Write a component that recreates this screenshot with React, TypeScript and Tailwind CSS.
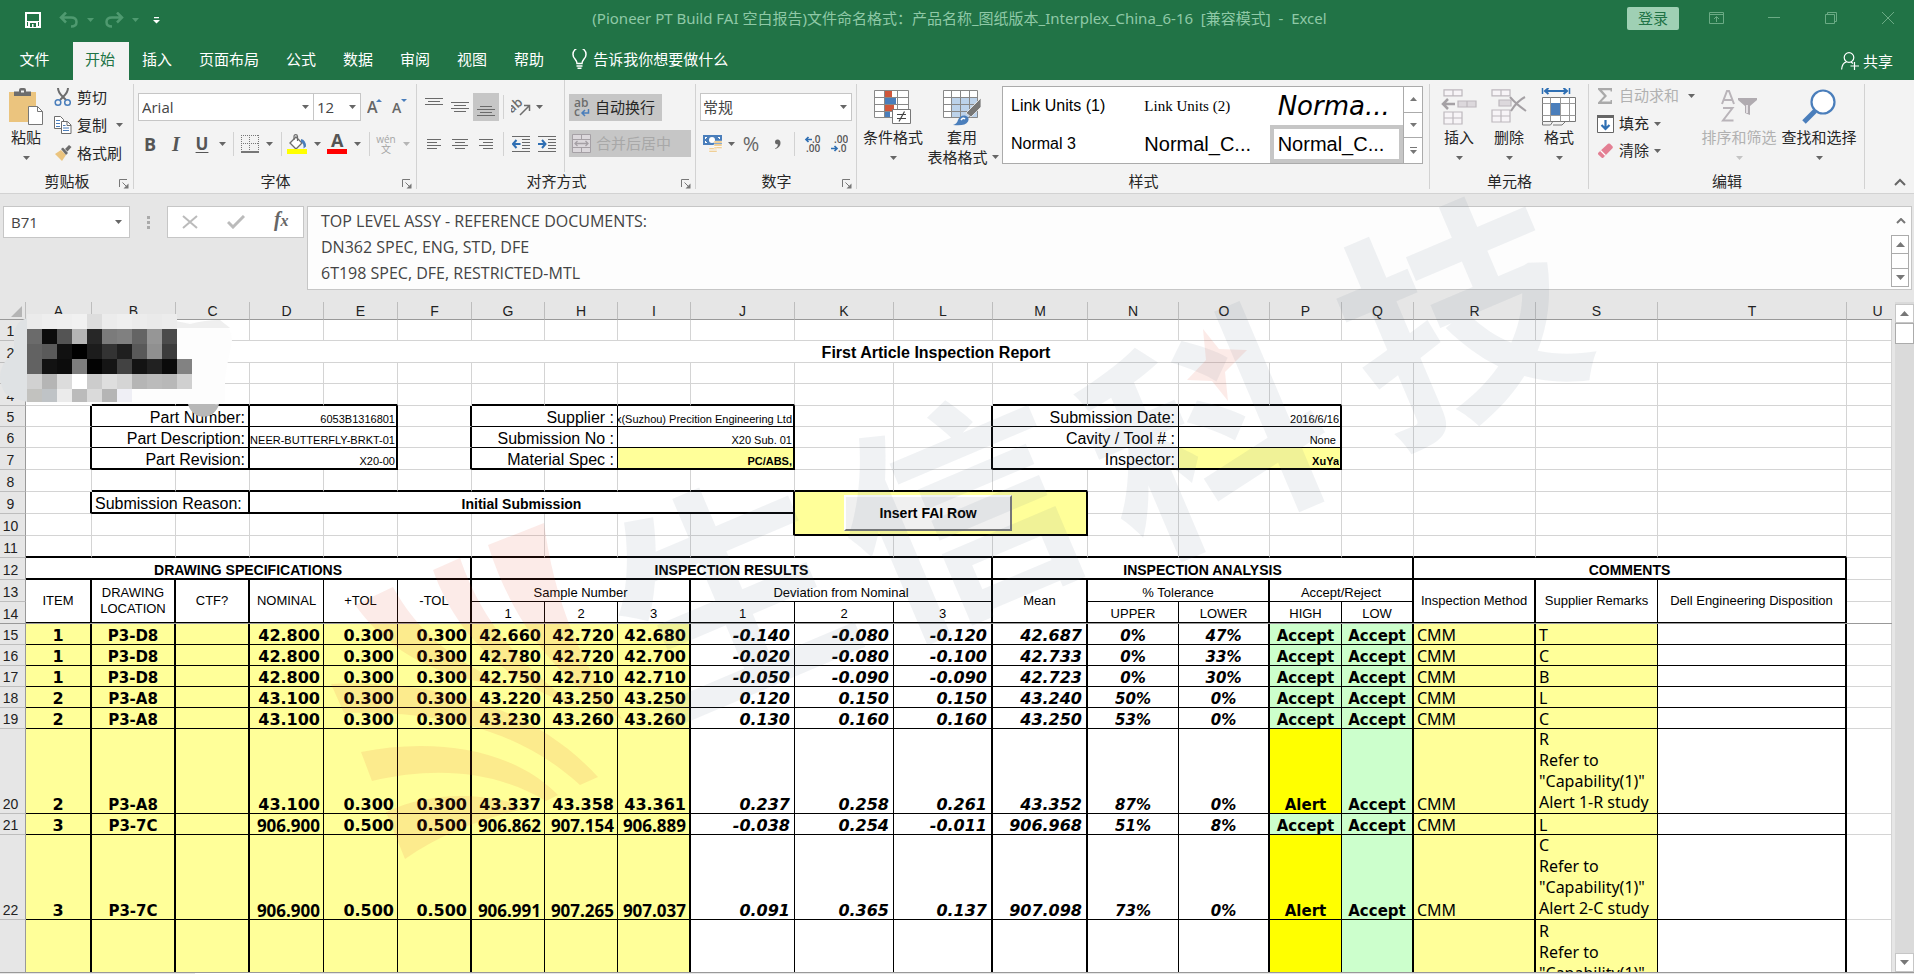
import React, { useState } from "react";
import clsx from "clsx";

type Line = "none" | "grid" | "thin" | "thick";

const RIGHT: Record<Line, string> = {
    none: "border-r-0",
    grid: "border-r border-r-[#d4d4d4]",
    thin: "border-r border-r-black",
    thick: "border-r-2 border-r-black",
};

const BOTTOM: Record<Line, string> = {
    none: "border-b-0",
    grid: "border-b border-b-[#d4d4d4]",
    thin: "border-b border-b-black",
    thick: "border-b-2 border-b-black",
};

const COLUMNS = [
    { name: "A", width: "w-[66px]" },
    { name: "B", width: "w-[84px]" },
    { name: "C", width: "w-[74px]" },
    { name: "D", width: "w-[74px]" },
    { name: "E", width: "w-[74px]" },
    { name: "F", width: "w-[74px]" },
    { name: "G", width: "w-[73px]" },
    { name: "H", width: "w-[73px]" },
    { name: "I", width: "w-[73px]" },
    { name: "J", width: "w-[104px]" },
    { name: "K", width: "w-[99px]" },
    { name: "L", width: "w-[99px]" },
    { name: "M", width: "w-[95px]" },
    { name: "N", width: "w-[91px]" },
    { name: "O", width: "w-[91px]" },
    { name: "P", width: "w-[72px]" },
    { name: "Q", width: "w-[72px]" },
    { name: "R", width: "w-[122px]" },
    { name: "S", width: "w-[122px]" },
    { name: "T", width: "w-[189px]" },
    { name: "U", width: "" },
];

interface Measure {
    row: number;
    item: string;
    location: string;
    nominal: string;
    tol: string;
    samples: string[];
    deviation: string[];
    mean: string;
    upper: string;
    lower: string;
    high: string;
    low: string;
    method: string;
    remarks: string[];
}

const MEASURES: Measure[] = [
    { row: 15, item: "1", location: "P3-D8", nominal: "42.800", tol: "0.300", samples: ["42.660", "42.720", "42.680"], deviation: ["-0.140", "-0.080", "-0.120"], mean: "42.687", upper: "0%", lower: "47%", high: "Accept", low: "Accept", method: "CMM", remarks: ["T"] },
    { row: 16, item: "1", location: "P3-D8", nominal: "42.800", tol: "0.300", samples: ["42.780", "42.720", "42.700"], deviation: ["-0.020", "-0.080", "-0.100"], mean: "42.733", upper: "0%", lower: "33%", high: "Accept", low: "Accept", method: "CMM", remarks: ["C"] },
    { row: 17, item: "1", location: "P3-D8", nominal: "42.800", tol: "0.300", samples: ["42.750", "42.710", "42.710"], deviation: ["-0.050", "-0.090", "-0.090"], mean: "42.723", upper: "0%", lower: "30%", high: "Accept", low: "Accept", method: "CMM", remarks: ["B"] },
    { row: 18, item: "2", location: "P3-A8", nominal: "43.100", tol: "0.300", samples: ["43.220", "43.250", "43.250"], deviation: ["0.120", "0.150", "0.150"], mean: "43.240", upper: "50%", lower: "0%", high: "Accept", low: "Accept", method: "CMM", remarks: ["L"] },
    { row: 19, item: "2", location: "P3-A8", nominal: "43.100", tol: "0.300", samples: ["43.230", "43.260", "43.260"], deviation: ["0.130", "0.160", "0.160"], mean: "43.250", upper: "53%", lower: "0%", high: "Accept", low: "Accept", method: "CMM", remarks: ["C"] },
    { row: 20, item: "2", location: "P3-A8", nominal: "43.100", tol: "0.300", samples: ["43.337", "43.358", "43.361"], deviation: ["0.237", "0.258", "0.261"], mean: "43.352", upper: "87%", lower: "0%", high: "Alert", low: "Accept", method: "CMM", remarks: ["R", "Refer to", '"Capability(1)"', "Alert 1-R study"] },
    { row: 21, item: "3", location: "P3-7C", nominal: "906.900", tol: "0.500", samples: ["906.862", "907.154", "906.889"], deviation: ["-0.038", "0.254", "-0.011"], mean: "906.968", upper: "51%", lower: "8%", high: "Accept", low: "Accept", method: "CMM", remarks: ["L"] },
    { row: 22, item: "3", location: "P3-7C", nominal: "906.900", tol: "0.500", samples: ["906.991", "907.265", "907.037"], deviation: ["0.091", "0.365", "0.137"], mean: "907.098", upper: "73%", lower: "0%", high: "Alert", low: "Accept", method: "CMM", remarks: ["C", "Refer to", '"Capability(1)"', "Alert 2-C study"] },
];

/* ---------- small ribbon pieces ---------- */

const Caret = ({ className = "text-[#666]" }: { className?: string }) => (
    <svg width="7" height="4" viewBox="0 0 7 4" className={clsx("shrink-0", className)}>
        <path d="M0 0h7L3.500 4z" fill="currentColor" />
    </svg>
);

const CaretButton = ({ label, className, dim }: { label: string; className: string; dim?: boolean }) => (
    <button type="button" aria-label={label} className={clsx("flex h-7 items-center justify-center", className)}>
        <Caret className={dim ? "text-[#b5b5b5]" : "text-[#666]"} />
    </button>
);

const Sep = () => <span className="mx-auto h-6 w-px bg-[#d2d2d2]" />;

const Launcher = ({ label }: { label: string }) => (
    <button type="button" aria-label={label} className="absolute right-[5px] bottom-1">
        <svg width="10" height="10" viewBox="0 0 10 10" fill="none" stroke="#777">
            <path d="M.5 8V.5H8" />
            <path d="M3.500 3.500 8 8" />
            <path d="M9.500 4.500v5h-5z" fill="#777" stroke="none" />
        </svg>
    </button>
);

interface GroupProps {
    title: string;
    className: string;
    launcher?: boolean;
    children: React.ReactNode;
}

const Group = ({ title, className, launcher, children }: GroupProps) => (
    <section className={clsx("relative flex flex-col", className)}>
        <div className="flex h-[92px]">{children}</div>
        <p className="text-center leading-[18px]">{title}</p>
        {launcher && <Launcher label={title} />}
        <span className="absolute top-1 right-0 bottom-1 w-px bg-[#d2d2d2]" />
    </section>
);

interface BigButtonProps {
    label: string;
    icon: React.ReactNode;
    className: string;
    dim?: boolean;
}

const BigButton = ({ label, icon, className, dim }: BigButtonProps) => (
    <button type="button" className={clsx("flex flex-col items-center pt-2 whitespace-nowrap", className, dim && "text-[#b1b1b1]")}>
        <span className="flex h-[38px] items-center">{icon}</span>
        <span className="leading-[22px]">{label}</span>
        <Caret className={clsx("mt-2", dim ? "text-[#c4c4c4]" : "text-[#666]")} />
    </button>
);

const Lines = ({ rows, y = 0 }: { rows: [number, number][]; y?: number }) => (
    <svg width="18" height="18" viewBox="0 0 18 18" stroke="#6a6a6a">
        {rows.map(([from, to], i) => (
            <path key={i} d={`M${from} ${y + i * 3 + 0.5}H${to}`} />
        ))}
    </svg>
);

/* ---------- icons ---------- */

const PasteIcon = () => (
    <svg width="36" height="40" viewBox="0 0 36 40">
        <path d="M1 5h27v30H1z" fill="#ebc47e" />
        <path d="M6 9V4.500h5V3q0-2 2-2h3q2 0 2 2v1.500h5V9z" fill="#6d6d6d" />
        <path d="M13 3.500h3v2h-3z" fill="#f3f3f3" />
        <path d="M20.500 19.500h9l5 5v13h-14z" fill="#fff" stroke="#777" />
        <path d="M29.500 19.500v5h5" fill="none" stroke="#777" />
    </svg>
);

const CutIcon = () => (
    <svg width="18" height="20" viewBox="0 0 18 20" fill="none">
        <path d="M4 1c0 4 2 6 4.500 8.500L12 13M14 1c0 4-2 6-4.500 8.500L6 13" stroke="#6d6d6d" strokeWidth="2" />
        <circle cx="4" cy="15.500" r="2.800" stroke="#4a7ebb" strokeWidth="1.500" />
        <circle cx="13.500" cy="15.500" r="2.800" stroke="#4a7ebb" strokeWidth="1.500" />
    </svg>
);

const CopyIcon = () => (
    <svg width="18" height="18" viewBox="0 0 18 18" fill="#fff" stroke="#6d6d6d">
        <path d="M.5.500h6l3 3v9h-9z" />
        <path d="M7.500 5.500h6l3.500 3.500v8.500H7.500z" />
        <path d="M13 5.500v4h4" fill="none" />
        <path d="M2 4.500h4M2 7.500h4M2 10.500h4M9 9.500h2.500M9 12h6M9 14.500h6" stroke="#4a7ebb" />
    </svg>
);

const PainterIcon = () => (
    <svg width="18" height="16" viewBox="0 0 18 16">
        <path d="m1 9 6-4 5 5-4 6z" fill="#ebc47e" />
        <path d="m7 4 2-1.500L14 8l-2 2z" fill="#6d6d6d" />
        <path d="m11 4 4-4 2.500 2-4 4.500z" fill="#6d6d6d" />
    </svg>
);

const BorderIcon = () => (
    <svg width="18" height="18" viewBox="0 0 18 18" fill="none" stroke="#777">
        <path d="M0 .5h18M.5 0v17M17.500 0v17M8.500 0v17M0 8.500h18" strokeDasharray="1 1" />
        <path d="M0 17h18" strokeWidth="2" />
    </svg>
);

const FillIcon = () => (
    <svg width="20" height="20" viewBox="0 0 20 20">
        <path d="M3 9 9 3l6 6-6 6z" fill="#fff" stroke="#6d6d6d" strokeWidth="1.300" />
        <path d="M7 6V2.500Q7 .7 8.700.7t1.800 1.800V7" fill="none" stroke="#6d6d6d" strokeWidth="1.200" />
        <path d="M14 5q5 1 5 7.500l-2.500 2Q17 9 14 8z" fill="#4a7ebb" />
        <path d="M0 15h20v5H0z" fill="#ff0" />
    </svg>
);

const OrientationIcon = () => (
    <svg width="20" height="20" viewBox="0 0 20 20">
        <text x="-1" y="12" fontSize="13" fontWeight="600" fill="#6d6d6d" transform="rotate(-42 6 12)" fontFamily="Open Sans, sans-serif">ab</text>
        <path d="m9 18 9-9M13 8.500h5.500V14" fill="none" stroke="#6d6d6d" strokeWidth="1.500" />
    </svg>
);

const IndentIcon = ({ left }: { left?: boolean }) => (
    <svg width="18" height="16" viewBox="0 0 18 16" fill="none" stroke="#6a6a6a">
        <path d="M0 .5h18M10 3.500h8M10 6.500h8M10 9.500h8M10 12.500h8M0 15.500h18" />
        <path d={left ? "M8.500 8H1M4.500 4 1 8l3.500 4" : "M0 8h7.500M4 4l3.500 4L4 12"} stroke="#2f6fb3" strokeWidth="2" />
    </svg>
);

const WrapIcon = () => (
    <svg width="16" height="20" viewBox="0 0 16 20">
        <text x="0" y="9" fontSize="12" fontWeight="600" fill="#6d6d6d" fontFamily="Open Sans, sans-serif">ab</text>
        <text x="0" y="18" fontSize="12" fontWeight="600" fill="#6d6d6d" fontFamily="Open Sans, sans-serif">c</text>
        <path d="M14.500 11v4H8.500M11 12l-3 3 3 3" fill="none" stroke="#4a7ebb" strokeWidth="1.500" />
    </svg>
);

const MergeIcon = () => (
    <svg width="19" height="19" viewBox="0 0 19 19" fill="none" stroke="#a5a0a5">
        <path d="M.5.500h18v18H.5zM.5 5.500h18M.5 13.500h18M9.500.500v5M9.500 13.500v5" fill="#dcd8dc" />
        <path d="M3 9.500h13M5.500 7 3 9.500 5.500 12M13.500 7 16 9.500 13.500 12" strokeWidth="1.300" />
    </svg>
);

const MoneyIcon = () => (
    <svg width="20" height="19" viewBox="0 0 20 19">
        <path d="M0 0h19v10H0z" fill="#4a7ebb" />
        <circle cx="9" cy="5" r="3" fill="#fff" />
        <path d="M2 2h2v1H3v1H2zM15 2h2v2h-1V3h-1zM2 8V6h1v1h1v1z" fill="#fff" />
        <path d="M11 6h8v2h-8zM11 9h8v2h-8zM11 12h8v1.500h-8zM6 13h8v1.500H6zM6 15.500h8V17H6z" fill="#ebc47e" stroke="#fff" strokeWidth=".4" />
    </svg>
);

const DecimalIcon = ({ add }: { add?: boolean }) => (
    <svg width="18" height="18" viewBox="0 0 18 18" fontFamily="Open Sans, sans-serif" fontSize="10" fontWeight="600" fill="#555">
        <text x={add ? 8 : 4} y="8">{add ? ".0" : ".00"}</text>
        <text x={add ? 2 : 8} y="17">{add ? ".00" : ".0"}</text>
        <path d={add ? "M8 4.500H2M4.500 2 2 4.500 4.500 7" : "M1 13.500h6M4.500 11 7 13.500 4.500 16"} fill="none" stroke="#2f6fb3" strokeWidth="1.700" />
    </svg>
);

const ConditionalIcon = () => (
    <svg width="38" height="36" viewBox="0 0 38 36">
        <path d="M.5 1.500h34v27H.5z" fill="#fff" />
        <path d="M11 2h7v6h-7z" fill="#d0573b" />
        <path d="M11 9h11v6H11z" fill="#4a7ebb" />
        <path d="M11 16h9v6h-9z" fill="#d0573b" />
        <path d="M11 23h5v5h-5z" fill="#4a7ebb" />
        <path d="M.5 1.500h34v27H.5zM.5 8.500h34M.5 15.500h34M.5 22.500h34M10.500 1.500v27M23.500 1.500v27" fill="none" stroke="#888" />
        <path d="M18.500 20.500h18v14h-18z" fill="#fff" stroke="#777" />
        <path d="M23 25.500h9M23 29.500h9M30.500 22.500l-5.500 10" stroke="#444" strokeWidth="1.200" />
    </svg>
);

const TableFormatIcon = () => (
    <svg width="38" height="37" viewBox="0 0 38 37">
        <path d="M.5 1.500h34v27H.5z" fill="#fff" />
        <path d="M9 9h26v20H9z" fill="#bcd2ea" />
        <path d="M.5 1.500h34v27H.5zM.5 8.500h34M.5 15.500h34M.5 22.500h34M8.500 1.500v27M17.500 1.500v27M26.500 1.500v27" fill="none" stroke="#888" />
        <path d="M38 9v9L28 28l-5-4z" fill="#777" stroke="#f3f3f3" strokeWidth=".8" />
        <path d="M10 36q4-1 5-5 2-5 7-4.500 5 1.500 3 6-3 5-15 3.500z" fill="#4a7ebb" />
        <path d="M18 31q2-3 4-1" stroke="#fff" strokeWidth="1.500" fill="none" />
    </svg>
);

const InsertCellsIcon = () => (
    <svg width="36" height="36" viewBox="0 0 36 36" fill="none" stroke="#bdb8bd" strokeWidth="1.200">
        <path d="M3 .8h18v6H3zM12 .8v6M3 23h18v12H3zM3 29h18M12 23v12" fill="#f7f4f7" />
        <path d="M17 12h18v6H17zM26 12v6" fill="#dcd8dc" />
        <path d="M14 15H2M7 10l-5 5 5 5" stroke="#a5a1a5" strokeWidth="2.500" />
    </svg>
);

const DeleteCellsIcon = () => (
    <svg width="36" height="36" viewBox="0 0 36 36" fill="none" stroke="#bdb8bd" strokeWidth="1.200">
        <path d="M1 .8h18v6H1zM10 .8v6M1 21h18v12H1zM1 27h18M10 21v12" fill="#f7f4f7" />
        <path d="M8 11h12v6H8z" fill="#dcd8dc" />
        <path d="M19 8q6 7 16 14M34 8q-8 4-14 14" stroke="#a5a1a5" strokeWidth="2" />
    </svg>
);

const FormatCellsIcon = () => (
    <svg width="36" height="38" viewBox="0 0 36 38" fill="none">
        <path d="M1.500 0v6M28.500 0v6" stroke="#2f6fb3" strokeWidth="1.500" />
        <path d="M4 3h22M7.500 0 4 3l3.500 3M22.500 0 26 3l-3.500 3" stroke="#2f6fb3" strokeWidth="2" />
        <path d="M1.500 9.500h33v24h-33z" fill="#fff" stroke="#777" />
        <path d="M1.500 15.500h33M1.500 27.500h33M9.500 9.500v24M19.500 9.500v24M28.500 9.500v24" stroke="#999" />
        <path d="M10 15h9v12h-9z" fill="#4a7ebb" />
        <path d="M1.500 34v3h8l2-3M12 37h9l3-3" stroke="#777" />
    </svg>
);

const SumIcon = () => (
    <svg width="16" height="16" viewBox="0 0 16 16" className="shrink-0">
        <path d="M1 0h14v3.500h-1.500V2.200H5L10 8l-5.500 5.600h9V12H15v4H1v-1.500L7 8 1 1.500z" fill="#aaa" />
    </svg>
);

const FillDownIcon = () => (
    <svg width="17" height="18" viewBox="0 0 17 18">
        <path d="M.5 1.500h16v16H.5z" fill="#fff" stroke="#666" />
        <path d="M0 0h17v3H0z" fill="#666" />
        <path d="M8.500 5v9M4.500 10l4 4 4-4" fill="none" stroke="#2f6fb3" strokeWidth="2.200" />
    </svg>
);

const EraserIcon = () => (
    <svg width="17" height="16" viewBox="0 0 17 16">
        <path d="M1.500 9.500 11 .8q1-.8 2 0l2.500 2.400q.8 1 0 2L6.500 14.500q-1 1-2 0L1.200 11.500q-.7-1 .3-2z" fill="#e37f93" />
        <path d="m3.500 7.500 5 5" stroke="#fff" strokeWidth="1.200" />
    </svg>
);

const SortFilterIcon = () => (
    <svg width="36" height="34" viewBox="0 0 36 34">
        <path d="m1 14 5-13h2l5 13M3 10h8M2 18h9.500L2 30.500h10.500" fill="none" stroke="#b9b4b9" strokeWidth="2" />
        <path d="M17 8h19v2l-7 6v9l-5-2v-7l-7-6z" fill="#b0abb0" />
        <path d="M25 15h2v8h-2z" fill="#e4e0e4" />
    </svg>
);

const FindIcon = () => (
    <svg width="36" height="36" viewBox="0 0 36 36" fill="none" stroke="#4a7ebb">
        <circle cx="22" cy="13" r="11.500" fill="#fff" strokeWidth="2.200" />
        <path d="m14 22-11 11" strokeWidth="5" />
    </svg>
);

/* ---------- window parts ---------- */

const TitleBar = () => (
    <header className="flex h-[42px] items-center text-[#8fc9a6]">
        <div className="flex flex-1 items-center pb-[2px] pl-[25px]">
            <button type="button" aria-label="保存">
                <svg width="16" height="16" viewBox="0 0 16 16" fill="none" stroke="#fff">
                    <path d="M1 1h14v14H1z" strokeWidth="2" />
                    <path d="M2 9.500h12" />
                    <path d="M3 9h10v6H3z" fill="#fff" stroke="none" />
                    <path d="M5 11h6v4H5z" fill="#217346" stroke="none" />
                    <path d="M7 12h1.500v3H7z" fill="#fff" stroke="none" />
                </svg>
            </button>
            <button type="button" aria-label="撤消" className="ml-[18px] flex items-center gap-2 text-[#4f9a70]">
                <svg width="20" height="16" viewBox="0 0 20 16" fill="none" stroke="currentColor" strokeWidth="2.500">
                    <path d="M2 5.500h10q5.500 0 5.500 4.500T12 14.500M7 .5l-5 5 5 5" />
                </svg>
                <Caret className="text-[#4f9a70]" />
            </button>
            <button type="button" aria-label="恢复" className="ml-[10px] flex items-center gap-2 text-[#4f9a70]">
                <svg width="20" height="16" viewBox="0 0 20 16" fill="none" stroke="currentColor" strokeWidth="2.500">
                    <path d="M18 5.500H8Q2.500 5.500 2.500 10T8 14.500M13 .5l5 5-5 5" />
                </svg>
                <Caret className="text-[#4f9a70]" />
            </button>
            <button type="button" aria-label="自定义快速访问工具栏" className="ml-[14px]">
                <svg width="7" height="7" viewBox="0 0 7 7" fill="#fff">
                    <path d="M1 0h5v1.200H1zM0 3h7L3.500 6.500z" />
                </svg>
            </button>
        </div>
        <h1 className="pb-[6px] font-['Noto_Sans','Noto_Sans_CJK_SC',sans-serif] text-[15px] whitespace-pre">(Pioneer PT Build FAI 空白报告)文件命名格式：产品名称_图纸版本_Interplex_China_6-16  [兼容模式]  -  Excel</h1>
        <div className="flex flex-1 items-center justify-end pr-5 pb-[6px]">
            <button type="button" className="mr-[30px] h-[23px] w-[52px] rounded-xs bg-[#9fd0b4] text-[15px] leading-[23px] text-[#217346]">登录</button>
            <button type="button" aria-label="功能区显示选项" className="mr-11">
                <svg width="15" height="12" viewBox="0 0 15 12" fill="none" stroke="#6bab85">
                    <path d="M.5.500h14v11H.5zM.5 2.500h14M7.500 10V5M5 7l2.500-2.500L10 7" />
                </svg>
            </button>
            <button type="button" aria-label="最小化" className="mr-[45px]">
                <svg width="12" height="12" viewBox="0 0 12 12" stroke="#6bab85">
                    <path d="M0 5.500h12" />
                </svg>
            </button>
            <button type="button" aria-label="还原" className="mr-[45px]">
                <svg width="12" height="12" viewBox="0 0 12 12" fill="none" stroke="#6bab85">
                    <path d="M.5 2.500h9v9h-9zM2.500 2.500v-2h9v9h-2" />
                </svg>
            </button>
            <button type="button" aria-label="关闭">
                <svg width="12" height="12" viewBox="0 0 12 12" stroke="#6bab85">
                    <path d="m0 0 12 12M12 0 0 12" />
                </svg>
            </button>
        </div>
    </header>
);

const TABS = ["开始", "插入", "页面布局", "公式", "数据", "审阅", "视图", "帮助"];

const TabBar = () => {
    const [active, setActive] = useState("开始");

    return (
        <nav className="flex h-[38px] items-stretch text-[15px] text-white">
            <button type="button" className="w-[73px] pr-1 pb-1">文件</button>
            <div className="flex gap-px">
                {TABS.map((tab) => (
                    <button
                        key={tab}
                        type="button"
                        onClick={() => setActive(tab)}
                        className={clsx("pr-[14px] pb-1 pl-3", tab === active && "bg-[#f3f3f3] text-[#217346]")}
                    >
                        {tab}
                    </button>
                ))}
            </div>
            <button type="button" className="ml-[14px] flex items-center gap-[6px] pb-1">
                <svg width="15" height="20" viewBox="0 0 15 20" fill="none" stroke="#fff" strokeWidth="1.500">
                    <path d="M5 14.500q0-2-2-4.500A6.500 6.500 0 1 1 12 10q-2 2.500-2 4.500zM4.500 17h6M5.500 19.200h4" />
                </svg>
                告诉我你想要做什么
            </button>
            <button type="button" className="mr-[21px] ml-auto flex items-center gap-1">
                <svg width="18" height="18" viewBox="0 0 18 18" fill="none" stroke="#fff" strokeWidth="1.200">
                    <circle cx="8" cy="5.500" r="4.800" />
                    <path d="M.6 17.500Q1 11 5.500 9.800M10 10l2 1.500M13.500 10v8M9.500 14h8.500" />
                </svg>
                共享
            </button>
        </nav>
    );
};

const ClipboardGroup = () => (
    <Group title="剪贴板" className="w-[134px]" launcher>
        <BigButton label="粘贴" icon={<PasteIcon />} className="ml-px w-[50px]" />
        <div className="flex flex-col pt-[3px] pl-[3px]">
            <button type="button" className="flex h-7 items-center gap-[5px]"><CutIcon />剪切</button>
            <div className="flex">
                <button type="button" className="flex h-7 items-center gap-[5px]"><CopyIcon />复制</button>
                <CaretButton label="复制选项" className="ml-[6px] w-3" />
            </div>
            <button type="button" className="flex h-7 items-center gap-[5px]"><PainterIcon />格式刷</button>
        </div>
    </Group>
);

const FontGroup = () => (
    <Group title="字体" className="w-[283px]" launcher>
        <div className="flex flex-col pt-[13px] pl-1">
            <div className="flex h-7">
                <div className="relative">
                    <select aria-label="字体" className="h-7 w-[176px] appearance-none border border-[#c6c6c6] bg-white pl-[3px] text-[#444]">
                        <option>Arial</option>
                    </select>
                    <span className="pointer-events-none absolute top-3 right-[5px]"><Caret /></span>
                </div>
                <div className="relative -ml-px">
                    <select aria-label="字号" className="h-7 w-12 appearance-none border border-[#c6c6c6] bg-white pl-[3px] text-[#444]">
                        <option>12</option>
                    </select>
                    <span className="pointer-events-none absolute top-3 right-[5px]"><Caret /></span>
                </div>
                <button type="button" aria-label="增大字号" className="ml-[6px] w-6">
                    <svg width="16" height="18" viewBox="0 0 16 18">
                        <text x="0" y="15" fontSize="16" fontWeight="600" fill="#666" fontFamily="Open Sans, sans-serif">A</text>
                        <path d="m9 4 3-3 3 3z" fill="#4a7ebb" />
                    </svg>
                </button>
                <button type="button" aria-label="减小字号" className="w-6">
                    <svg width="16" height="18" viewBox="0 0 16 18">
                        <text x="1" y="15" fontSize="14" fontWeight="600" fill="#666" fontFamily="Open Sans, sans-serif">A</text>
                        <path d="m10 1 3 3 3-3z" fill="#4a7ebb" />
                    </svg>
                </button>
            </div>
            <div className="mt-[9px] flex h-7 items-center text-[#555]">
                <button type="button" className="w-6 text-lg font-bold">B</button>
                <button type="button" className="w-7 font-['Liberation_Serif',serif] text-xl font-bold italic">I</button>
                <button type="button" className="w-6 text-[17px] font-bold underline underline-offset-2">U</button>
                <CaretButton label="下划线选项" className="w-4" />
                <Sep />
                <button type="button" aria-label="边框" className="flex w-6 justify-center"><BorderIcon /></button>
                <CaretButton label="边框选项" className="w-4" />
                <Sep />
                <button type="button" aria-label="填充颜色" className="flex w-6 justify-center"><FillIcon /></button>
                <CaretButton label="填充颜色选项" className="w-4" />
                <button type="button" aria-label="字体颜色" className="flex w-6 justify-center">
                    <svg width="20" height="20" viewBox="0 0 20 20">
                        <text x="4" y="13" fontSize="18" fontWeight="700" fill="#555" fontFamily="Open Sans, sans-serif">A</text>
                        <path d="M0 15h20v5H0z" fill="#f00" />
                    </svg>
                </button>
                <CaretButton label="字体颜色选项" className="w-4" />
                <Sep />
                <button type="button" className="flex w-[26px] flex-col items-center text-[10px] leading-[10px] text-[#a5a5a5]">
                    <span>wén</span>
                    <span>文</span>
                </button>
                <CaretButton label="拼音选项" className="w-4" dim />
            </div>
        </div>
    </Group>
);

const AlignGroup = () => (
    <Group title="对齐方式" className="w-[279px]" launcher>
        <div className="flex w-[148px] flex-col gap-[9px] border-r border-[#d2d2d2] pt-[13px] pl-1">
            <div className="flex h-7 items-center">
                <button type="button" aria-label="顶端对齐" className="flex w-[26px] justify-center"><Lines rows={[[0, 18], [3, 15], [0, 18]]} y={0} /></button>
                <button type="button" aria-label="垂直居中" className="flex w-[26px] justify-center"><Lines rows={[[0, 18], [3, 15], [0, 18], [3, 15]]} y={4} /></button>
                <button type="button" aria-label="底端对齐" className="flex h-7 w-[26px] items-center justify-center bg-[#c6c6c6]"><Lines rows={[[3, 15], [0, 18], [3, 15], [0, 18]]} y={8} /></button>
                <span className="mx-1 h-6 w-px bg-[#d2d2d2]" />
                <button type="button" aria-label="方向" className="ml-[3px]"><OrientationIcon /></button>
                <CaretButton label="方向选项" className="w-4" />
            </div>
            <div className="flex h-7 items-center">
                <button type="button" aria-label="左对齐" className="flex w-[26px] justify-center"><Lines rows={[[2, 16], [2, 12], [2, 16], [2, 12]]} y={4} /></button>
                <button type="button" aria-label="居中" className="flex w-[26px] justify-center"><Lines rows={[[1, 17], [4, 14], [1, 17], [4, 14]]} y={4} /></button>
                <button type="button" aria-label="右对齐" className="flex w-[26px] justify-center"><Lines rows={[[2, 16], [6, 16], [2, 16], [6, 16]]} y={4} /></button>
                <span className="mx-1 h-6 w-px bg-[#d2d2d2]" />
                <button type="button" aria-label="减少缩进量" className="flex w-[26px] justify-center"><IndentIcon left /></button>
                <button type="button" aria-label="增加缩进量" className="flex w-[26px] justify-center"><IndentIcon /></button>
            </div>
        </div>
        <div className="flex flex-col items-start gap-[9px] pt-[14px] pl-1">
            <button type="button" className="flex h-[27px] w-[93px] items-center gap-[5px] bg-[#c6c6c6] pl-[5px]"><WrapIcon />自动换行</button>
            <button type="button" className="flex h-[27px] w-[122px] items-center gap-[5px] bg-[#c6c6c6] pl-[3px] text-[#a8a8a8]"><MergeIcon />合并后居中</button>
        </div>
    </Group>
);

const NumberGroup = () => (
    <Group title="数字" className="w-[161px]" launcher>
        <div className="flex flex-col gap-[9px] pt-[13px] pl-1">
            <div className="relative">
                <select aria-label="数字格式" className="h-7 w-[152px] appearance-none border border-[#c6c6c6] bg-white pl-[2px] text-[#444]">
                    <option>常规</option>
                </select>
                <span className="pointer-events-none absolute top-3 right-[5px]"><Caret /></span>
            </div>
            <div className="flex h-7 items-center text-[#666]">
                <button type="button" aria-label="会计数字格式" className="flex w-[25px] justify-center"><MoneyIcon /></button>
                <CaretButton label="会计数字格式选项" className="w-3" />
                <button type="button" className="w-7 text-xl">%</button>
                <button type="button" aria-label="千位分隔样式" className="flex w-6 justify-center">
                    <svg width="7" height="10" viewBox="0 0 7 10">
                        <path d="M1 9.500Q4 8 4 5.500 1 5.500 1 3 1 .5 3.500.5 6.500.5 6.500 4 6.500 8 1.500 10z" fill="#666" />
                    </svg>
                </button>
                <Sep />
                <button type="button" aria-label="增加小数位数" className="flex w-[26px] justify-center"><DecimalIcon add /></button>
                <button type="button" aria-label="减少小数位数" className="flex w-[26px] justify-center"><DecimalIcon /></button>
            </div>
        </div>
    </Group>
);

const STYLES = [
    { label: "Link Units (1)", className: "text-base" },
    { label: "Link Units (2)", className: "font-['Liberation_Serif',serif] text-[15px]" },
    { label: "Norma...", className: "font-['DejaVu_Sans',sans-serif] text-[26px] leading-7 italic" },
    { label: "Normal 3", className: "text-base" },
    { label: "Normal_C...", className: "text-xl" },
    { label: "Normal_C...", className: "text-xl", selected: true },
];

const StylesGroup = () => (
    <Group title="样式" className="min-w-[573px] flex-1">
        <BigButton label="条件格式" icon={<ConditionalIcon />} className="ml-[3px] w-[66px]" />
        <button type="button" className="flex w-[72px] flex-col items-center pt-2">
            <span className="flex h-[38px] items-center"><TableFormatIcon /></span>
            <span className="leading-[22px]">套用</span>
            <span className="flex items-center gap-1 pl-[2px] leading-[18px] whitespace-nowrap">表格格式<Caret /></span>
        </button>
        <div className="mt-[6px] mr-[7px] ml-[4px] flex h-[78px] flex-1 border border-[#ababab] bg-white">
            <div className="grid flex-1 grid-cols-3 grid-rows-2 font-['Liberation_Sans',sans-serif] text-black">
                {STYLES.map((style, i) => (
                    <button
                        key={i}
                        type="button"
                        className={clsx(
                            "overflow-hidden text-left whitespace-nowrap",
                            style.className,
                            style.selected ? "border-4 border-[#c6c6c6] pl-1" : "pl-2"
                        )}
                    >
                        {style.label}
                    </button>
                ))}
            </div>
            <div className="flex w-[19px] flex-col divide-y divide-[#ababab] border-l border-[#ababab]">
                <button type="button" aria-label="上一行" className="flex flex-1 items-center justify-center"><Caret className="rotate-180 text-[#777]" /></button>
                <button type="button" aria-label="下一行" className="flex flex-1 items-center justify-center"><Caret className="text-[#777]" /></button>
                <button type="button" aria-label="其他" className="flex flex-1 flex-col items-center justify-center gap-[2px]">
                    <span className="h-px w-[7px] bg-[#777]" />
                    <Caret className="text-[#777]" />
                </button>
            </div>
        </div>
    </Group>
);

const Ribbon = () => (
    <div className="flex h-[114px] border-b border-[#d2d2d2] bg-[#f3f3f3] text-[15px] text-[#262626]">
        <ClipboardGroup />
        <FontGroup />
        <AlignGroup />
        <NumberGroup />
        <StylesGroup />
        <Group title="单元格" className="w-[159px]">
            <BigButton label="插入" icon={<InsertCellsIcon />} className="ml-1 w-[50px]" />
            <BigButton label="删除" icon={<DeleteCellsIcon />} className="w-[50px]" />
            <BigButton label="格式" icon={<FormatCellsIcon />} className="w-[50px]" />
        </Group>
        <Group title="编辑" className="w-[276px]">
            <div className="flex w-[108px] flex-col pt-[2px] pl-2 whitespace-nowrap">
                <div className="flex">
                    <button type="button" className="flex h-[27px] shrink-0 items-center gap-[6px] text-[#b1b1b1]"><SumIcon />自动求和</button>
                    <CaretButton label="自动求和选项" className="ml-[6px] w-3 shrink-0" />
                </div>
                <button type="button" className="flex h-[27px] items-center gap-[5px]"><FillDownIcon />填充<Caret /></button>
                <button type="button" className="flex h-[27px] items-center gap-[5px]"><EraserIcon />清除<Caret /></button>
            </div>
            <BigButton label="排序和筛选" icon={<SortFilterIcon />} className="ml-[2px] w-20" dim />
            <BigButton label="查找和选择" icon={<FindIcon />} className="w-20" />
        </Group>
        <div className="flex w-[49px] items-end justify-end pr-2 pb-[7px]">
            <button type="button" aria-label="折叠功能区">
                <svg width="12" height="8" viewBox="0 0 12 8" fill="none" stroke="#666" strokeWidth="2">
                    <path d="m1 7 5-5 5 5" />
                </svg>
            </button>
        </div>
    </div>
);

const ScrollArrow = ({ down }: { down?: boolean }) => (
    <svg width="9" height="5" viewBox="0 0 9 5" fill="#777">
        <path d={down ? "M0 0h9L4.500 5z" : "M0 5h9L4.500 0z"} />
    </svg>
);

const FormulaBar = () => (
    <div className="flex items-start pt-3 pr-[2px] pb-3 pl-[3px] font-['Open_Sans','Noto_Sans_CJK_SC',sans-serif] text-[15px] text-[#444]">
        <div className="relative">
            <input aria-label="名称框" defaultValue="B71" className="block h-8 w-[127px] border border-[#c6c6c6] bg-white pl-[7px]" />
            <span className="pointer-events-none absolute top-[14px] right-2"><Caret /></span>
        </div>
        <div className="flex h-8 w-[37px] flex-col items-center justify-center gap-[2px]">
            <span className="size-[3px] bg-[#aaa]" />
            <span className="size-[3px] bg-[#aaa]" />
            <span className="size-[3px] bg-[#aaa]" />
        </div>
        <div className="flex h-8 w-[137px] items-center justify-around border border-[#c6c6c6] bg-white">
            <button type="button" aria-label="取消">
                <svg width="16" height="14" viewBox="0 0 16 14" stroke="#bbb" strokeWidth="2"><path d="m1 1 14 12M15 1 1 13" /></svg>
            </button>
            <button type="button" aria-label="输入">
                <svg width="18" height="14" viewBox="0 0 18 14" fill="none" stroke="#bbb" strokeWidth="3"><path d="m1 7 5 5L17 1" /></svg>
            </button>
            <button type="button" aria-label="插入函数" className="pb-1 font-['Liberation_Serif',serif] text-xl leading-6 font-bold text-[#666] italic">
                f<span className="text-base">x</span>
            </button>
        </div>
        <div className="ml-[3px] flex h-[84px] flex-1 border border-[#c6c6c6] bg-[#fdfdfd]">
            <textarea
                aria-label="编辑栏"
                className="block h-full flex-1 resize-none overflow-hidden pt-px pl-[13px] text-base leading-[26px] outline-none"
                defaultValue={"TOP LEVEL ASSY - REFERENCE DOCUMENTS:\nDN362 SPEC, ENG, STD, DFE\n6T198 SPEC, DFE, RESTRICTED-MTL"}
            />
            <div className="flex w-5 flex-col">
                <button type="button" aria-label="折叠编辑栏" className="flex h-7 items-center justify-center">
                    <svg width="10" height="6" viewBox="0 0 10 6" fill="none" stroke="#777" strokeWidth="2"><path d="m1 5 4-4 4 4" /></svg>
                </button>
                <button type="button" aria-label="向上" className="flex h-[19px] w-[18px] items-center justify-center border border-[#ababab] bg-white"><ScrollArrow /></button>
                <span className="h-[14px] w-[18px] border-x border-[#ababab] bg-white" />
                <button type="button" aria-label="向下" className="flex h-[19px] w-[18px] items-center justify-center border border-[#ababab] bg-white"><ScrollArrow down /></button>
            </div>
        </div>
    </div>
);

/* ---------- sheet ---------- */

interface CellProps {
    span?: number;
    rows?: number;
    right?: Line;
    bottom?: Line;
    className?: string;
    children?: React.ReactNode;
}

const Cell = ({ span, rows, right = "grid", bottom = "grid", className, children }: CellProps) => (
    <td colSpan={span} rowSpan={rows} className={clsx("p-0 whitespace-nowrap", RIGHT[right], BOTTOM[bottom], className)}>
        {children}
    </td>
);

const Blank = ({ count, bottom }: { count: number; bottom?: Line }) => (
    <>
        {Array.from({ length: count }, (_, i) => (
            <Cell key={i} bottom={bottom} />
        ))}
    </>
);

interface RowProps {
    n: number;
    h?: string;
    children?: React.ReactNode;
}

const Row = ({ n, h = "h-[22px]", children }: RowProps) => (
    <tr className={clsx(h, "align-bottom")}>
        <th scope="row" className="border-r border-b border-r-[#999] border-b-[#bdbdbd] bg-[#e6e6e6] p-0 pr-1 text-center text-sm leading-[18px] font-normal text-[#222]">{n}</th>
        {children}
        <Cell className="border-r-[#999]" />
    </tr>
);

const LABEL = "pr-[3px] text-right text-base leading-4";
const VALUE = "pr-px text-[11px] leading-[14px]";
const HEADING = "text-center text-sm leading-4 font-bold";

// Values are anchored to the right edge, long ones lose their first letters
const Clip = ({ children }: { children: React.ReactNode }) => (
    <div className="flex justify-end overflow-hidden">{children}</div>
);

const INFO = [
    { n: 5, h: "h-[21px]", part: ["Part Number:", "6053B1316801"], supplier: ["Supplier :", "Interplex(Suzhou) Precition Engineering Ltd"], date: ["Submission Date:", "2016/6/16"] },
    { n: 6, h: "h-[21px]", part: ["Part Description:", "PIONEER-BUTTERFLY-BRKT-01"], supplier: ["Submission No :", "X20 Sub. 01"], date: ["Cavity / Tool # :", "None "] },
    { n: 7, h: "h-[22px]", part: ["Part Revision:", "X20-00"], supplier: ["Material Spec :", "PC/ABS,"], date: ["Inspector:", "XuYa"], last: true },
];

const NUM = "font-['DejaVu_Sans',sans-serif] text-base leading-4 font-bold";
const WORD = "font-['DejaVu_Sans',sans-serif] text-[15px] leading-4 font-bold text-center";
const NOTE = "font-['Noto_Sans',sans-serif] text-base pl-[3px]";
const TIGHT = "font-['Noto_Sans',sans-serif] text-[17px] leading-4 font-bold";

const MeasureRow = ({ m }: { m: Measure }) => {
    const tall = m.remarks.length > 1;
    const num = (value: string) => (value.length > 6 ? TIGHT : NUM);

    return (
        <Row n={m.row} h={tall ? "h-[85px]" : "h-[21px]"}>
            <Cell right="thick" bottom="thin" className={clsx(NUM, "bg-[#ffff99] text-center")}>{m.item}</Cell>
            <Cell right="thick" bottom="thin" className={clsx(WORD, "bg-[#ffff99]")}>{m.location}</Cell>
            <Cell right="thick" bottom="thin" className="bg-[#ffff99]" />
            <Cell right="thin" bottom="thin" className={clsx(num(m.nominal), "bg-[#ffff99] pr-[3px] text-right")}>{m.nominal}</Cell>
            <Cell right="thin" bottom="thin" className={clsx(NUM, "bg-[#ffff99] pr-[3px] text-right")}>{m.tol}</Cell>
            <Cell right="thick" bottom="thin" className={clsx(NUM, "bg-[#ffff99] pr-[3px] text-right")}>{m.tol}</Cell>
            {m.samples.map((value, i) => (
                <Cell key={i} right={i === 2 ? "thick" : "thin"} bottom="thin" className={clsx(num(value), "bg-[#ffff99] pr-[3px] text-right")}>{value}</Cell>
            ))}
            {m.deviation.map((value, i) => (
                <Cell key={i} right={i === 2 ? "thick" : "thin"} bottom="thin" className={clsx(NUM, "pr-1 text-right italic")}>{value}</Cell>
            ))}
            <Cell right="thick" bottom="thin" className={clsx(NUM, "pr-1 text-right italic")}>{m.mean}</Cell>
            <Cell right="thin" bottom="thin" className={clsx(WORD, "italic")}>{m.upper}</Cell>
            <Cell right="thick" bottom="thin" className={clsx(WORD, "italic")}>{m.lower}</Cell>
            <Cell right="thin" bottom="thin" className={clsx(WORD, m.high === "Alert" ? "bg-[#ffff00]" : "bg-[#ccffcc]")}>{m.high}</Cell>
            <Cell right="thick" bottom="thin" className={clsx(WORD, "bg-[#ccffcc]")}>{m.low}</Cell>
            <Cell right="thick" bottom="thin" className={clsx(NOTE, "bg-[#ffff99] leading-[18px]")}>{m.method}</Cell>
            <Cell right="thin" bottom="thin" className={clsx(NOTE, "bg-[#ffff99]", tall ? "leading-[21px]" : "leading-[18px]")}>
                {m.remarks.map((line) => <div key={line}>{line}</div>)}
            </Cell>
            <Cell right="thick" bottom="thin" />
        </Row>
    );
};

const Sheet = () => (
    <table className="w-full table-fixed border-separate border-spacing-0 bg-white font-['Liberation_Sans',sans-serif] text-black">
        <colgroup>
            <col className="w-[26px]" />
            {COLUMNS.map((c) => <col key={c.name} className={c.width} />)}
        </colgroup>
        <thead>
            <tr className="h-[18px] bg-[#e6e6e6]">
                <th className="border-r border-b border-r-[#bdbdbd] border-b-[#999] p-0 align-bottom">
                    <svg width="11" height="11" viewBox="0 0 11 11" className="mr-[3px] mb-[2px] ml-auto"><path d="M11 0v11H0z" fill="#b5b5b5" /></svg>
                </th>
                {COLUMNS.map((c) => (
                    <th key={c.name} scope="col" className="border-r border-b border-r-[#bdbdbd] border-b-[#999] p-0 text-center align-bottom text-sm leading-4 font-normal text-[#222] last:border-r-0 last:pl-4">{c.name}</th>
                ))}
            </tr>
        </thead>
        <tbody>
            <Row n={1} h="h-[21px]"><Blank count={20} /></Row>
            <Row n={2}>
                <Cell span={20} className="text-center text-base leading-[18px] font-bold">First Article Inspection Report</Cell>
            </Row>
            <Row n={3} h="h-[21px]"><Blank count={20} /></Row>
            <Row n={4}>
                <Blank count={1} />
                <Blank count={4} bottom="thick" />
                <Blank count={1} />
                <Blank count={4} bottom="thick" />
                <Blank count={2} />
                <Blank count={4} bottom="thick" />
                <Blank count={4} />
            </Row>
            {INFO.map((r) => {
                const bottom: Line = r.last ? "thick" : "thin";
                return (
                    <Row key={r.n} n={r.n} h={r.h}>
                        <Cell right="thick" />
                        <Cell span={2} right="thick" bottom={bottom} className={LABEL}>{r.part[0]}</Cell>
                        <Cell span={2} right="thick" bottom={bottom} className={VALUE}><Clip>{r.part[1]}</Clip></Cell>
                        <Cell right="thick" />
                        <Cell span={2} right="thin" bottom={bottom} className={LABEL}>{r.supplier[0]}</Cell>
                        <Cell span={2} right="thick" bottom={bottom} className={clsx(VALUE, r.last && "bg-[#ffff99] font-bold")}><Clip>{r.supplier[1]}</Clip></Cell>
                        <Cell />
                        <Cell right="thick" />
                        <Cell span={2} right="thin" bottom={bottom} className={LABEL}>{r.date[0]}</Cell>
                        <Cell span={2} right="thick" bottom={bottom} className={clsx(VALUE, "whitespace-pre", r.last && "bg-[#ffff99] font-bold")}><Clip>{r.date[1]}</Clip></Cell>
                        <Blank count={4} />
                    </Row>
                );
            })}
            <Row n={8}>
                <Blank count={1} />
                <Blank count={12} bottom="thick" />
                <Blank count={7} />
            </Row>
            <Row n={9}>
                <Cell right="thick" />
                <Cell span={2} right="thick" bottom="thick" className="pl-[3px] text-base leading-4">Submission Reason:</Cell>
                <Cell span={7} right="thick" bottom="thick" className={HEADING}>Initial Submission</Cell>
                <Cell span={3} rows={2} right="thick" bottom="thick" className="bg-[#ffff99] pl-[49px] align-middle">
                    <button type="button" className="block h-9 w-[168px] border-2 border-t-white border-r-[#777] border-b-[#777] border-l-white bg-[#f0f0f0] text-sm font-bold">Insert FAI Row</button>
                </Cell>
                <Blank count={7} />
            </Row>
            <Row n={10}>
                <Blank count={9} />
                <Cell right="thick" />
                <Blank count={7} />
            </Row>
            <Row n={11}><Blank count={20} bottom="thick" /></Row>
            <Row n={12}>
                <Cell span={6} right="thick" bottom="thick" className={HEADING}>DRAWING SPECIFICATIONS</Cell>
                <Cell span={6} right="thick" bottom="thick" className={HEADING}>INSPECTION RESULTS</Cell>
                <Cell span={5} right="thick" bottom="thick" className={HEADING}>INSPECTION ANALYSIS</Cell>
                <Cell span={3} right="thick" bottom="thick" className={HEADING}>COMMENTS</Cell>
            </Row>
            <tr className="h-[22px] text-center align-bottom text-[13px] leading-4">
                <th scope="row" className="border-r border-b border-r-[#999] border-b-[#bdbdbd] bg-[#e6e6e6] p-0 pr-1 text-sm leading-[18px] font-normal text-[#222]">13</th>
                <Cell rows={2} right="thick" bottom="thin" className="align-middle">ITEM</Cell>
                <Cell rows={2} right="thick" bottom="thin" className="align-middle">DRAWING<br />LOCATION</Cell>
                <Cell rows={2} right="thick" bottom="thin" className="align-middle">CTF?</Cell>
                <Cell rows={2} right="thin" bottom="thin" className="align-middle">NOMINAL</Cell>
                <Cell rows={2} right="thin" bottom="thin" className="align-middle">+TOL</Cell>
                <Cell rows={2} right="thick" bottom="thin" className="align-middle">-TOL</Cell>
                <Cell span={3} right="thick" bottom="thin">Sample Number</Cell>
                <Cell span={3} right="thick" bottom="thin">Deviation from Nominal</Cell>
                <Cell rows={2} right="thick" bottom="thin" className="align-middle">Mean</Cell>
                <Cell span={2} right="thick" bottom="thin">% Tolerance</Cell>
                <Cell span={2} right="thick" bottom="thin">Accept/Reject</Cell>
                <Cell rows={2} right="thick" bottom="thin" className="align-middle">Inspection Method</Cell>
                <Cell rows={2} right="thin" bottom="thin" className="align-middle">Supplier Remarks</Cell>
                <Cell rows={2} right="thick" bottom="thin" className="align-middle">Dell Engineering Disposition</Cell>
                <Cell className="border-r-[#999]" />
            </tr>
            <tr className="h-[21px] text-center align-bottom text-[13px] leading-4">
                <th scope="row" className="border-r border-r-[#999] bg-[#e6e6e6] p-0 pr-1 text-sm leading-[18px] font-normal text-[#222]">14</th>
                <Cell right="thin" bottom="thin">1</Cell>
                <Cell right="thin" bottom="thin">2</Cell>
                <Cell right="thick" bottom="thin">3</Cell>
                <Cell right="thin" bottom="thin">1</Cell>
                <Cell right="thin" bottom="thin">2</Cell>
                <Cell right="thick" bottom="thin">3</Cell>
                <Cell right="thin" bottom="thin">UPPER</Cell>
                <Cell right="thick" bottom="thin">LOWER</Cell>
                <Cell right="thin" bottom="thin">HIGH</Cell>
                <Cell right="thick" bottom="thin">LOW</Cell>
                <Cell bottom="none" className="border-r-[#999]" />
            </tr>
            {/* frozen pane edge */}
            <tr className="h-px bg-[#999]" aria-hidden="true"><td colSpan={22} className="p-0" /></tr>
            {MEASURES.map((m) => <MeasureRow key={m.row} m={m} />)}
            <tr className="h-[85px] align-top">
                <th className="border-r border-r-[#999] bg-[#e6e6e6] p-0" />
                <Cell right="thick" className="bg-[#ffff99]" />
                <Cell right="thick" className="bg-[#ffff99]" />
                <Cell right="thick" className="bg-[#ffff99]" />
                <Cell right="thin" className="bg-[#ffff99]" />
                <Cell right="thin" className="bg-[#ffff99]" />
                <Cell right="thick" className="bg-[#ffff99]" />
                <Cell right="thin" className="bg-[#ffff99]" />
                <Cell right="thin" className="bg-[#ffff99]" />
                <Cell right="thick" className="bg-[#ffff99]" />
                <Cell right="thin" />
                <Cell right="thin" />
                <Cell right="thick" />
                <Cell right="thick" />
                <Cell right="thin" />
                <Cell right="thick" />
                <Cell right="thin" className="bg-[#ffff00]" />
                <Cell right="thick" className="bg-[#ccffcc]" />
                <Cell right="thick" className="bg-[#ffff99]" />
                <Cell right="thin" className={clsx(NOTE, "bg-[#ffff99] pt-px leading-[21px]")}>
                    <div>R</div>
                    <div>Refer to</div>
                    <div>"Capability(1)"</div>
                </Cell>
                <Cell right="thick" />
                <Cell className="border-r-[#999]" />
            </tr>
        </tbody>
    </table>
);

const MOSAIC = [
    ["#ebebeb", "#eeeeee", "#efefef", "#f1f1f1", "#dddddd", "#ececec", "#efefef", "#ececec", "#eaeaea", "#ececec"],
    ["#6b6b6b", "#0c0c0c", "#545454", "#b5b5b5", "#272727", "#7b7b7b", "#808080", "#646464", "#969696", "#4b4b4b"],
    ["#626262", "#5a5a5a", "#111111", "#000000", "#1c1c1c", "#333333", "#1f1f1f", "#595959", "#909090", "#3c3c3c"],
    ["#626262", "#121212", "#0c0c0c", "#7d7d7d", "#030303", "#151515", "#424242", "#131313", "#212121", "#0a0a0a", "#828282"],
    ["#d1d1d1", "#b5b5b5", "#dcdcdc", "#ffffff", "#cccccc", "#dedede", "#d5d5d5", "#b5b5b5", "#bbbbbb", "#b8b8b8", "#d0d0d0"],
    ["#c2c2bf", "#bfc3c6", "#ebebeb", "#bbbbbb", "#dadada", "#b5b5b5", "#efeff5"],
];

// Pixelated company logo in the sheet's top left corner
const MosaicLogo = () => (
    <svg width="240" height="110" viewBox="0 0 240 110" className="absolute top-3 left-0">
        <path d="M188 90a16 17 0 0 0 31 0z" fill="#b8b8b8" />
        <path d="M27 4C60-1 150 0 160 2l16 6h45q11 6 11 18c-3 20-7 30-7 44v18q-8 3-10 2H27z" fill="#fdfdfd" />
        <path d="M176 14V7l14 3q15-4 30-4l10 8z" fill="#efefef" />
        <path d="M27 4q-12 4-13 16v20Q0 48 0 64q2 18 14 20l13 4z" fill="#dfe2e4" />
        {MOSAIC.map((line, y) =>
            line.map((fill, x) => (
                <rect key={`${x}-${y}`} x={27 + x * 15} y={y * 15} width="15" height={y === 5 ? 13 : 15} fill={fill} />
            ))
        )}
    </svg>
);

const Watermark = () => (
    <svg width="1914" height="974" viewBox="0 0 1914 974" className="pointer-events-none absolute top-0 left-0" aria-hidden="true">
        <g fill="#5a6b80" fillOpacity=".09" fontFamily="Noto Sans CJK SC, sans-serif" fontWeight="700" fontSize="232" textAnchor="middle">
            <text x="0" y="88" transform="translate(728 594) rotate(-23)">生</text>
            <text x="0" y="88" transform="translate(958 514) rotate(-23)">信</text>
            <text x="0" y="88" transform="translate(1206 434) rotate(-23)">科</text>
            <text x="0" y="88" transform="translate(1460 317) rotate(-23)">技</text>
        </g>
        <g fill="#e8452f" fillOpacity=".11">
            <path d="m1203 329 16 20 28 1-22 22 3 29-16-20-25-1 19-20z" />
            <path d="m488 545 56-22c10 75 35 140 79 197-60-35-110-95-135-175z" />
            <path d="m433 570 27-12c20 60 60 110 120 150-75-25-125-75-147-138z" />
            <path d="m355 605 38-18c25 45 60 75 120 100-70-8-120-30-158-82z" />
            <path d="M331 684c100-4 200 20 267 93l-18 8c-60-55-140-75-236-72z" />
            <path d="M361 752c70-14 150-5 197 43l-12 6c-50-30-110-35-174-20z" />
            <path d="M386 812c40-18 80-20 125-10l8 8c-40 10-80 25-114 49z" />
        </g>
    </svg>
);

const App: React.FC = () => (
    <div className="relative flex h-screen flex-col overflow-hidden bg-[#e6e6e6] font-['Open_Sans','Noto_Sans_CJK_SC',sans-serif]">
        <div className="shrink-0 bg-[#217346]">
            <TitleBar />
            <TabBar />
        </div>
        <div className="shrink-0">
            <Ribbon />
            <FormulaBar />
        </div>
        <main className="flex min-h-0 flex-1">
            <div className="relative min-w-0 flex-1 overflow-hidden">
                <Sheet />
                <MosaicLogo />
            </div>
            <div className="ml-[3px] flex w-[19px] flex-col bg-[#dadada] pt-[2px]">
                <button type="button" aria-label="向上滚动" className="flex h-[19px] items-center justify-center border border-[#c6c6c6] bg-white"><ScrollArrow /></button>
                <span className="h-[21px] border border-[#ababab] bg-white" />
                <button type="button" aria-label="向下滚动" className="mt-auto flex h-[19px] items-center justify-center border border-[#c6c6c6] bg-white"><ScrollArrow down /></button>
            </div>
        </main>
        <footer className="h-[2px] shrink-0 border-t border-[#999] pl-[195px]">
            <div className="h-px w-[105px] bg-white" />
        </footer>
        <Watermark />
    </div>
);

export default App;
